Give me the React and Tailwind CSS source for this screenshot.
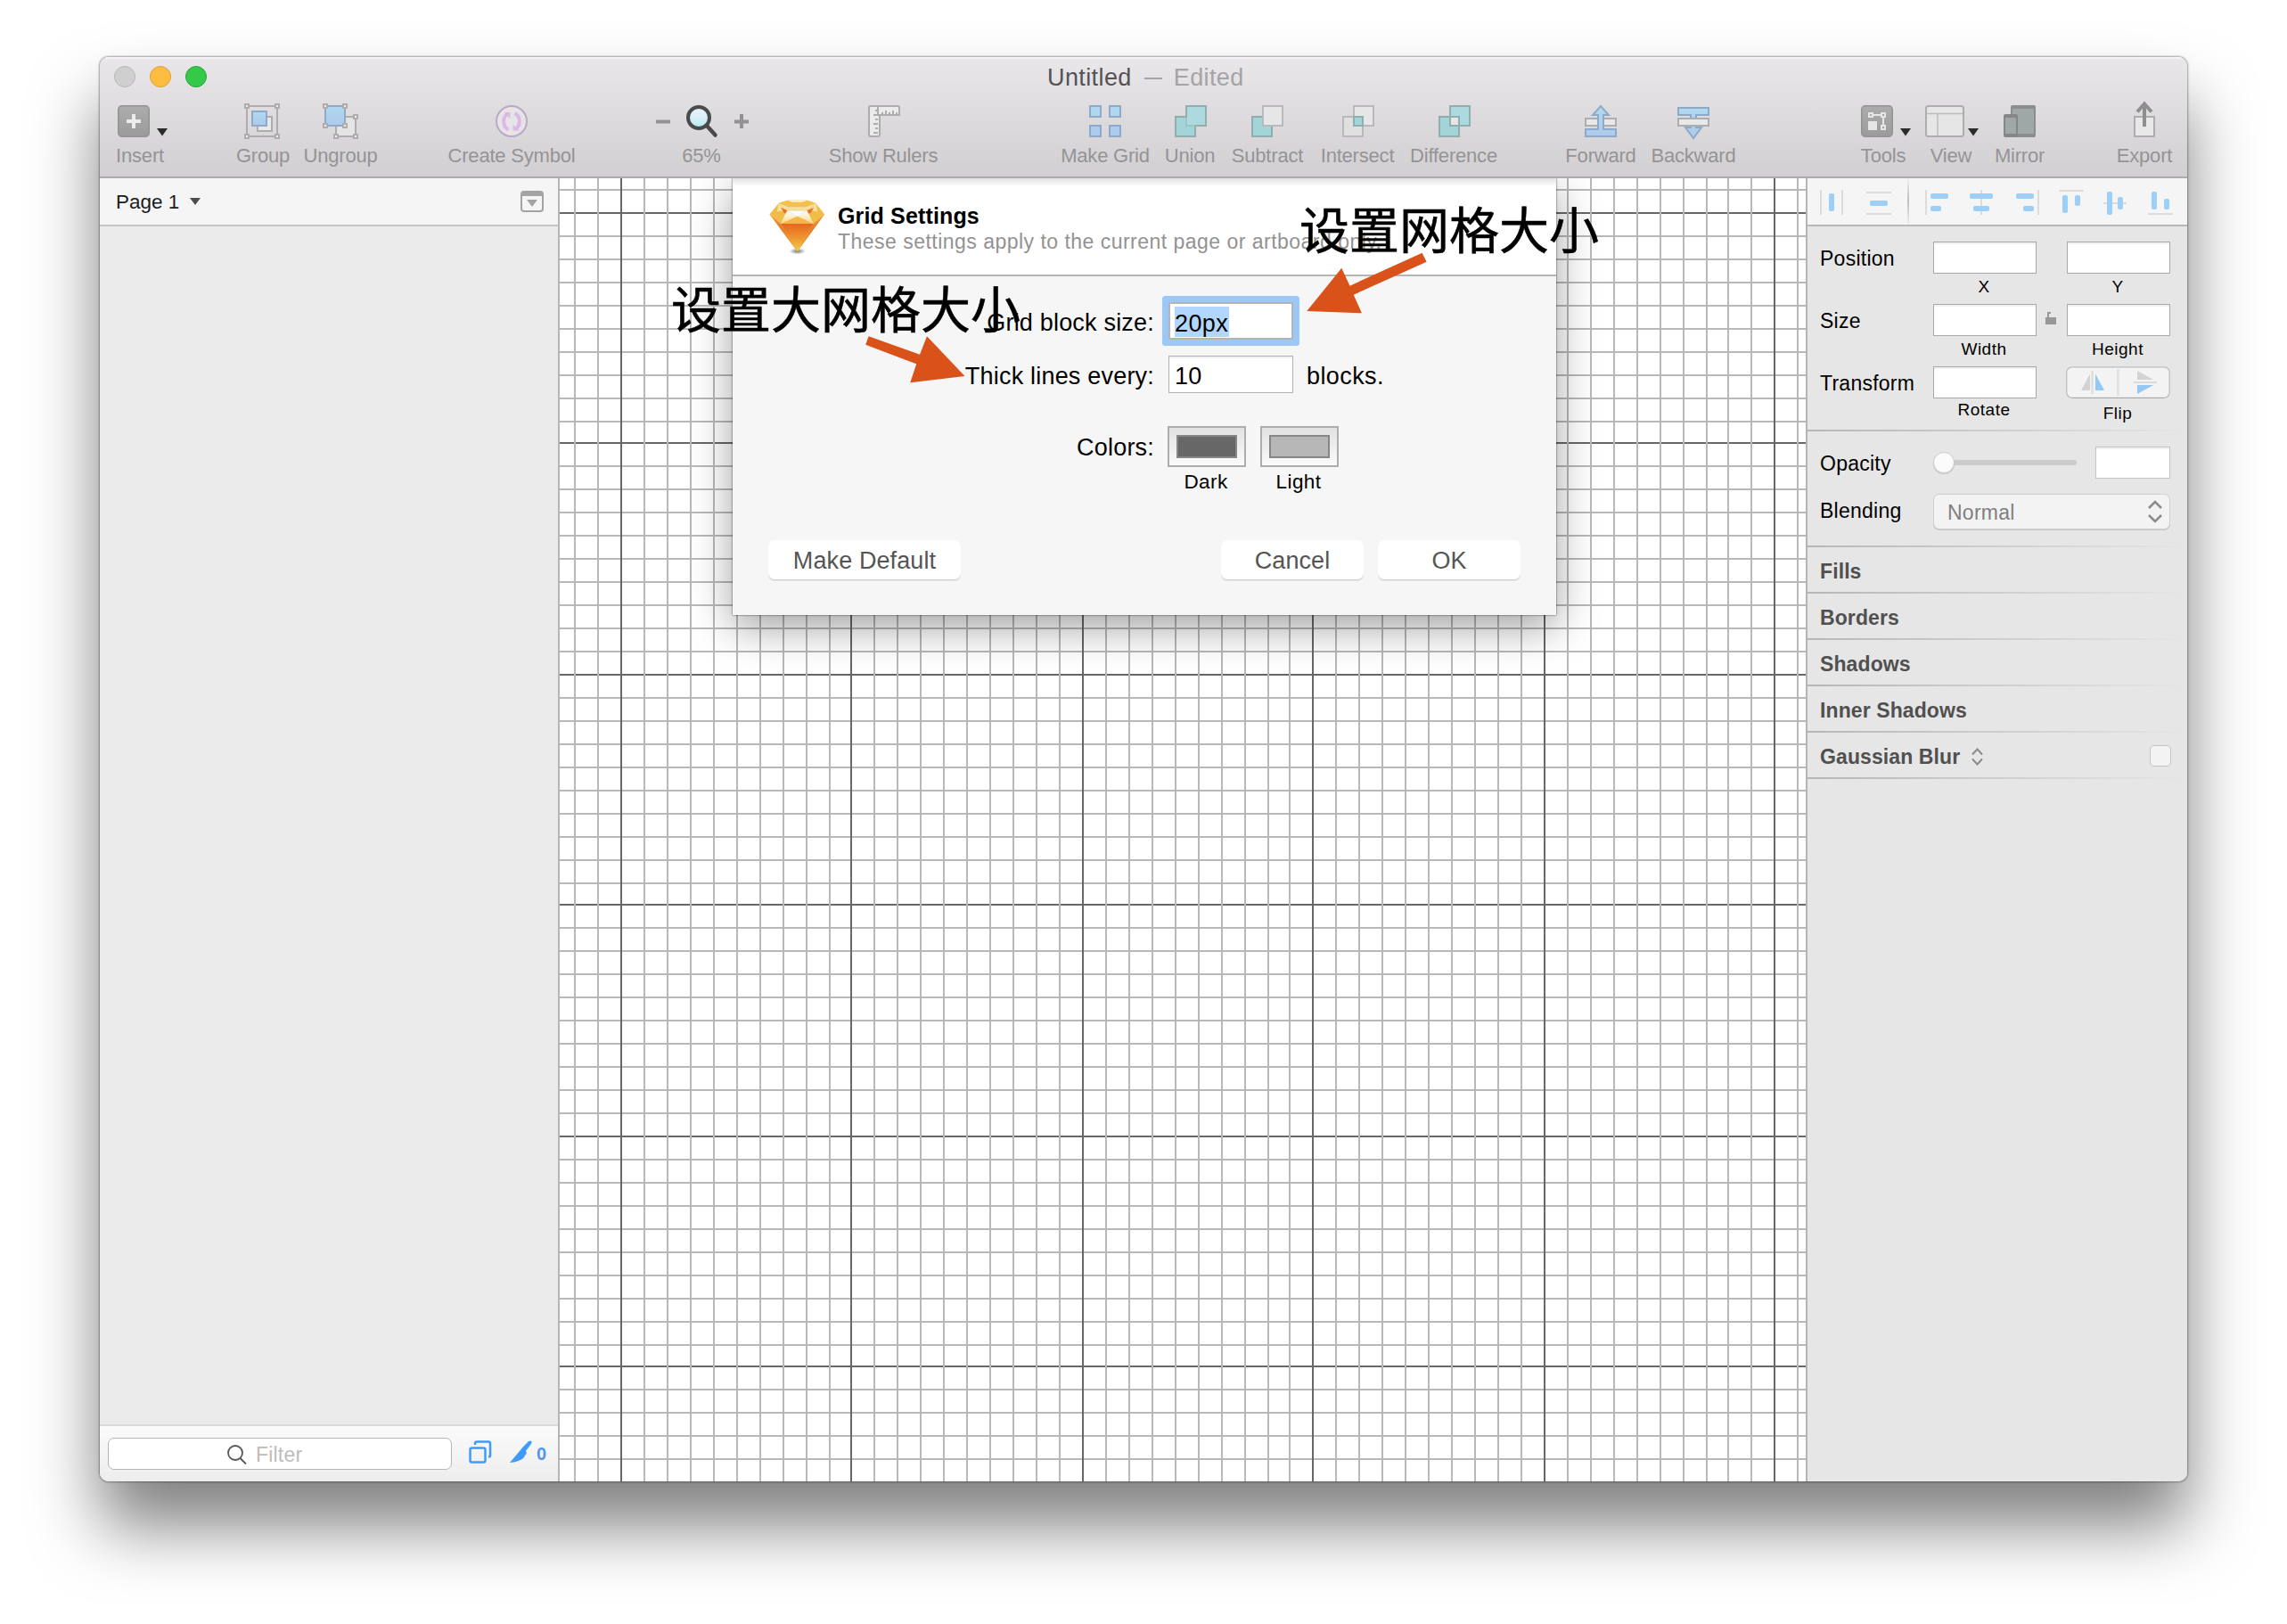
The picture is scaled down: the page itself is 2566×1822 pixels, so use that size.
import React from "react";

const range = (from, to, step = 26) => {
  const out = [];
  for (let v = from; v <= to; v += step) out.push(v);
  return out;
};

const V_LIGHT = [
  644, 670,
  ...range(722, 930), ...range(980, 1188), ...range(1240, 1422), 1446,
  ...range(1498, 1706), ...range(1758, 1914), 1938, 1964, 2016,
];
const V_DARK = [696, 954, 1214, 1472, 1732, 1990];
const H_LIGHT = [
  212, ...range(264, 472), ...range(522, 730), ...range(782, 990),
  ...range(1040, 1248), ...range(1300, 1508), ...range(1558, 1636),
];
const H_DARK = [238, 496, 756, 1014, 1274, 1532];

const vPath = (xs) => xs.map((x) => `M${x} 200h2v1462h-2z`).join("");
const hPath = (ys) => ys.map((y) => `M628 ${y}h1398v2h-1398z`).join("");

function GridCanvas() {
  return (
    <svg className="block h-[1462px] w-[1398px] shrink-0 bg-white" viewBox="628 200 1398 1462" shapeRendering="crispEdges">
      <path d={hPath(H_LIGHT)} fill="#b8b8b8" />
      <path d={hPath(H_DARK)} fill="#676767" />
      <path d={vPath(V_LIGHT)} fill="#b8b8b8" />
      <path d={vPath(V_DARK)} fill="#676767" />
    </svg>
  );
}

const Sq = ({ x, y, w = 36, h = 36, fill, stroke }) => (
  <rect x={x + 1} y={y + 1} width={w - 2} height={h - 2} fill={fill} stroke={stroke} strokeWidth="2" />
);
const Handle = ({ x, y }) => <rect x={x} y={y} width="4" height="4" fill="#eee" stroke="#adadad" strokeWidth="2" />;
const Caret = ({ x, y, fill = "#2b2b2b" }) => <path d={`M${x} ${y}h12l-6 8.500z`} fill={fill} />;

const GREY = "#adadad";
const BLUE = "#8fa9c9";
const TEAL = "#90adb0";

const TOOLS = [
  {
    label: "Insert", box: "ml-[19px] w-[52px]", vb: "131 114 52 44",
    icon: (
      <>
        <rect x="132.75" y="118.75" width="34.5" height="34.5" rx="4" fill="url(#btn)" stroke="#929292" strokeWidth="1.5" />
        <path d="M142 136h16M150 128v16" stroke="#ececec" strokeWidth="4" />
        <Caret x={176} y={144} />
      </>
    ),
  },
  {
    label: "Group", box: "ml-[82px] w-[60px]", vb: "265 114 60 44",
    icon: (
      <>
        <rect x="277" y="119" width="34" height="34" fill="none" stroke={GREY} strokeWidth="2" />
        <Handle x={275} y={117} /><Handle x={309} y={117} /><Handle x={275} y={151} /><Handle x={309} y={151} />
        <Sq x={288} y={130} w={18} h={18} fill="#e9e9e9" stroke={GREY} />
        <Sq x={282} y={124} w={18} h={18} fill="url(#blue)" stroke={BLUE} />
      </>
    ),
  },
  {
    label: "Ungroup", box: "ml-[16px] w-[82px]", vb: "341 114 82 44",
    icon: (
      <>
        <rect x="377" y="131" width="22" height="22" fill="#e4e4e4" stroke={GREY} strokeWidth="2" />
        <rect x="365" y="119" width="22" height="22" fill="url(#blue)" stroke={BLUE} strokeWidth="2" />
        <Handle x={363} y={117} /><Handle x={385} y={117} /><Handle x={363} y={139} /><Handle x={385} y={139} />
        <Handle x={397} y={129} /><Handle x={375} y={151} /><Handle x={397} y={151} />
      </>
    ),
  },
  {
    label: "Create Symbol", box: "ml-[80px] w-[142px]", vb: "503 114 142 44",
    icon: (
      <>
        <circle cx="574" cy="136" r="17" fill="#e6e4e7" stroke="#bba9c3" strokeWidth="2" />
        <path d="M570.500 145.500c-7-3.500-7-14.500-.5-18M577.500 127c7 3.500 7 14.500 .5 18" fill="none" stroke="#dcb8e6" strokeWidth="4" />
        <path d="M565.500 126h7v7zM582.500 146.500h-7v-7z" fill="#dcb8e6" />
      </>
    ),
  },
  {
    label: "65%", box: "ml-[120px] w-[44px]", vb: "765 114 44 44",
    icon: (
      <>
        <path d="M736 136.500h16" stroke="#929292" strokeWidth="4" />
        <path d="M824 136.500h16M832 128v16" stroke="#929292" strokeWidth="4" />
        <path d="M793 141l9.500 10.500" stroke="#4a4a4a" strokeWidth="4.500" strokeLinecap="round" />
        <circle cx="784" cy="132" r="12" fill="url(#lens)" stroke="#4a4a4a" strokeWidth="4" />
      </>
    ),
  },
  {
    label: "Show Rulers", box: "ml-[122px] w-[120px]", vb: "931 114 120 44",
    icon: (
      <>
        <path d="M977 119h30a2 2 0 0 1 2 2v8h-22v22a2 2 0 0 1-2 2h-8a2 2 0 0 1-2-2v-30a2 2 0 0 1 2-2z" fill="#ebebeb" stroke={GREY} strokeWidth="2" />
        <path d="M985 119v11M985 124h-3M985 129h-5M985 134h-3M985 139h-5M985 144h-3M985 149h-5M990 129v-3M994 129v-5M998 129v-3M1002 129v-5M1006 129v-3" stroke={GREY} strokeWidth="2" fill="none" />
      </>
    ),
  },
  {
    label: "Make Grid", box: "ml-[140px] w-[98px]", vb: "1191 114 98 44",
    icon: (
      <>
        <Sq x={1222} y={118} w={14} h={14} fill="#b0d7ee" stroke={BLUE} />
        <Sq x={1244} y={118} w={14} h={14} fill="#b0d7ee" stroke={BLUE} />
        <Sq x={1222} y={140} w={14} h={14} fill="#adcbec" stroke={BLUE} />
        <Sq x={1244} y={140} w={14} h={14} fill="#adcbec" stroke={BLUE} />
      </>
    ),
  },
  {
    label: "Union", box: "ml-[18px] w-[56px]", vb: "1307 114 56 44",
    icon: (
      <>
        <Sq x={1318} y={130} w={24} h={24} fill="#a3d5d8" stroke={TEAL} />
        <Sq x={1330} y={118} w={24} h={24} fill="#addade" stroke={TEAL} />
        <path d="M1331 132v9h10" fill="none" stroke="#9dc3c8" strokeWidth="2" />
      </>
    ),
  },
  {
    label: "Subtract", box: "ml-[18px] w-[82px]", vb: "1381 114 82 44",
    icon: (
      <>
        <Sq x={1404} y={130} w={24} h={24} fill="#a3d5d8" stroke={TEAL} />
        <Sq x={1416} y={118} w={24} h={24} fill="#e6e6e6" stroke="#b9b9bb" />
      </>
    ),
  },
  {
    label: "Intersect", box: "ml-[19px] w-[82px]", vb: "1482 114 82 44",
    icon: (
      <>
        <Sq x={1506} y={130} w={24} h={24} fill="#e0e0e0" stroke="#b9b9bb" />
        <Sq x={1518} y={118} w={24} h={24} fill="#e6e6e6" stroke="#b9b9bb" />
        <Sq x={1518} y={130} w={12} h={12} fill="#a3d5d8" stroke={TEAL} />
      </>
    ),
  },
  {
    label: "Difference", box: "ml-[19px] w-[96px]", vb: "1583 114 96 44",
    icon: (
      <>
        <Sq x={1614} y={130} w={24} h={24} fill="#a3d5d8" stroke={TEAL} />
        <Sq x={1626} y={118} w={24} h={24} fill="#addade" stroke={TEAL} />
        <Sq x={1626} y={130} w={12} h={12} fill="#e6e6e6" stroke={TEAL} />
      </>
    ),
  },
  {
    label: "Forward", box: "ml-[79px] w-[76px]", vb: "1758 114 76 44",
    icon: (
      <>
        <Sq x={1778} y={132} w={36} h={10} fill="#e8e8e8" stroke={GREY} />
        <path d="M1779 145h14v-16h-6l9-10 9 10h-6v16h14v8h-34z" fill="url(#blue)" stroke={BLUE} strokeWidth="2" />
      </>
    ),
  },
  {
    label: "Backward", box: "ml-[20px] w-[92px]", vb: "1854 114 92 44",
    icon: (
      <>
        <path d="M1883 121h34v8h-14v14h6l-9 12-9-12h6v-14h-14z" fill="url(#blue)" stroke={BLUE} strokeWidth="2" />
        <Sq x={1882} y={132} w={36} h={10} fill="#e8e8e8" stroke={GREY} />
      </>
    ),
  },
  {
    label: "Tools", box: "ml-[143px] w-[48px]", vb: "2089 114 48 44",
    icon: (
      <>
        <rect x="2088.750" y="118.750" width="34.500" height="34.500" rx="4" fill="url(#btn)" stroke="#929292" strokeWidth="1.500" />
        <rect x="2096" y="136" width="10" height="10" fill="#e6e6e6" />
        <path d="M2101 129h10M2113 131v10" stroke="#e6e6e6" strokeWidth="2" />
        <rect x="2097" y="127" width="4" height="4" fill="none" stroke="#e6e6e6" strokeWidth="2" />
        <rect x="2111" y="127" width="4" height="4" fill="none" stroke="#e6e6e6" strokeWidth="2" />
        <rect x="2111" y="141" width="4" height="4" fill="none" stroke="#e6e6e6" strokeWidth="2" />
        <Caret x={2132} y={144} />
      </>
    ),
  },
  {
    label: "View", box: "ml-[29px] w-[46px]", vb: "2166 114 46 44",
    icon: (
      <>
        <rect x="2161" y="119" width="42" height="34" rx="2.500" fill="#e6e6e6" stroke={GREY} strokeWidth="2" />
        <path d="M2162 127.500h40M2174 128v24" stroke="#bcbcbc" strokeWidth="1.500" />
        <Caret x={2208} y={144} />
      </>
    ),
  },
  {
    label: "Mirror", box: "ml-[26px] w-[56px]", vb: "2238 114 56 44",
    icon: (
      <>
        <rect x="2256" y="118" width="28" height="36" rx="2" fill="#8c8e8e" />
        <rect x="2258" y="122" width="24" height="28" fill="#a0a7a7" />
        <rect x="2248" y="128" width="16" height="26" rx="2" fill="#858787" />
        <rect x="2250" y="132" width="12" height="18" fill="#a0a7a7" />
      </>
    ),
  },
  {
    label: "Export", box: "ml-[82px] w-[60px]", vb: "2376 114 60 44",
    icon: (
      <>
        <Sq x={2394} y={130} w={24} h={24} fill="#e8e8e8" stroke={GREY} />
        <path d="M2406 142v-25M2398 125.500l8-9 8 9" fill="none" stroke="#8e8e8e" strokeWidth="4" />
      </>
    ),
  },
];

function Defs() {
  return (
    <svg className="absolute h-0 w-0">
      <defs>
        <linearGradient id="btn" x1="0" y1="0" x2="0" y2="1"><stop offset="0" stopColor="#acacac" /><stop offset="1" stopColor="#9b9b9b" /></linearGradient>
        <linearGradient id="blue" x1="0" y1="0" x2="0" y2="1"><stop offset="0" stopColor="#b0d9ee" /><stop offset="1" stopColor="#adcaeb" /></linearGradient>
        <linearGradient id="lens" x1="0" y1="0" x2="0" y2="1"><stop offset="0" stopColor="#eef4fc" /><stop offset=".6" stopColor="#d3edf5" /><stop offset="1" stopColor="#a3edf2" /></linearGradient>
      </defs>
    </svg>
  );
}

function TopBar() {
  return (
    <header className="relative flex h-[136px] flex-col border-b-2 border-[#adabae] bg-linear-to-b from-[#e9e7ea] to-[#d1cfd2] shadow-[inset_0_2px_0_#f4f3f5]">
      <div className="flex h-[50px] shrink-0">
        <div className="flex w-[1063px] gap-4 pt-[10px] pl-4">
          <i className="size-6 rounded-full border border-[#b5b5b5] bg-[#cfcfcf]" />
          <i className="size-6 rounded-full border border-[#e29b35] bg-[#fdbd41]" />
          <i className="size-6 rounded-full border border-[#22a437] bg-[#35c94a]" />
        </div>
        <div className="flex gap-[14px] pt-[7px] text-[27px] leading-[32px] tracking-[0.4px] whitespace-nowrap text-[#545255]">
          <span>Untitled</span>
          <span className="flex gap-[13px] text-[#a5a3a6]"><svg className="h-8 w-5" viewBox="0 0 20 32"><path d="M0 17h20" stroke="currentColor" strokeWidth="2" /></svg>Edited</span>
        </div>
      </div>
      <div className="flex">
        {TOOLS.map((t) => (
          <div key={t.label} className={`flex shrink-0 flex-col items-center ${t.box}`}>
            <svg className="h-[44px] w-full overflow-visible" viewBox={t.vb}>{t.icon}</svg>
            <span className="mt-[4px] text-[22px] leading-[26px] tracking-[-0.2px] whitespace-nowrap text-[#959396]">{t.label}</span>
          </div>
        ))}
      </div>
    </header>
  );
}

function Sidebar() {
  return (
    <aside className="flex w-[516px] shrink-0 flex-col border-r-2 border-[#b5b5b5] bg-[#ebebeb]">
      <div className="flex h-[54px] items-center border-b-2 border-[#c6c6c6] bg-[#f5f5f5] pr-4 pl-[18px]">
        <span className="mt-px text-[22.5px] leading-[26px] text-[#1c1c1c]">Page 1</span>
        <svg className="ml-[11px] h-[10px] w-[14px]" viewBox="0 0 14 10"><path d="M1 1h12l-6 8z" fill="#4c4c4c" /></svg>
        <svg className="mr-0 ml-auto h-6 w-[26px]" viewBox="0 0 26 24">
          <rect x="1" y="1" width="24" height="22" rx="3" fill="none" stroke="#a3a3a3" strokeWidth="2" />
          <path d="M1 6V3q0-2 2-2h20q2 0 2 2v3zM7 10h12l-6 8z" fill="#a3a3a3" />
        </svg>
      </div>
      <div className="flex-1" />
      <div className="flex h-[64px] items-start border-t-2 border-[#dadada] bg-linear-to-b from-[#fbfbfb] to-[#ededed] pt-[13px] pl-[9px]">
        <div className="flex h-[36px] w-[386px] items-center rounded-[7px] border-[1.5px] border-[#b5b5b5] bg-white pl-[132px]">
          <svg className="mt-px ml-px h-[22px] w-[22px]" viewBox="0 0 22 22" fill="none" stroke="#555" strokeWidth="1.800"><circle cx="9" cy="9" r="8" /><path d="M14.500 15l6.500 6.500" /></svg>
          <span className="mt-px ml-[10px] text-[23px] leading-[26px] tracking-[0.2px] text-[#bdbdbd]">Filter</span>
        </div>
        <svg className="mt-[3px] ml-[19px] h-[26px] w-[26px]" viewBox="0 0 26 26" fill="none" stroke="#3f9bfb" strokeWidth="2.500"><rect x="1.500" y="8.500" width="17" height="16" rx="2" /><path d="M7 5V3.500q0-2 2-2h13q2 0 2 2v13q0 2-2 2" /></svg>
        <svg className="mt-[3px] ml-[20px] h-[26px] w-[26px]" viewBox="0 0 26 26" fill="#3f9bfb"><path d="M0 25C6 18 13 9 20.500 1.500q3-2 4 0c.7 2-5 8-6.500 10.500l1 2.500c-1 1-2 2-3 4.500C12 23 6 24.500 0 25z" /></svg>
        <span className="mt-[7px] ml-[4px] text-[20px] leading-[22px] font-bold text-[#5595ef]">0</span>
      </div>
    </aside>
  );
}

const ALIGN = {
  lines: "M2042 213h2v28h-2zM2066 213h2v28h-2zM2094 215h28v2h-28zM2094 239h28v2h-28zM2160 213h2v28h-2zM2222 213h2v28h-2zM2286 213h2v28h-2zM2310 213h28v2h-28zM2360 227h26v2h-26zM2410 239h28v2h-28z",
  pills: [
    [2052, 217, 6, 20], [2098, 225, 20, 6],
    [2166, 217, 20, 6], [2166, 231, 12, 6],
    [2210, 217, 26, 6], [2214, 231, 18, 6],
    [2262, 217, 20, 6], [2270, 231, 12, 6],
    [2314, 219, 6, 20], [2328, 219, 6, 12],
    [2364, 215, 6, 26], [2376, 221, 6, 14],
    [2414, 215, 6, 20], [2428, 223, 6, 12],
  ],
};

function AlignBar() {
  return (
    <svg className="block h-[52px] w-[426px] shrink-0 bg-[#f5f5f5]" viewBox="2028 200 426 52">
      <defs><linearGradient id="sep" x1="0" y1="0" x2="0" y2="1"><stop offset="0" stopColor="#f0f0f0" /><stop offset=".5" stopColor="#bdbdbd" /><stop offset="1" stopColor="#f0f0f0" /></linearGradient></defs>
      <path d={ALIGN.lines} fill="#dcdcdc" />
      <rect x="2140" y="200" width="2" height="52" fill="url(#sep)" />
      {ALIGN.pills.map(([x, y, w, h]) => <rect key={`${x}-${y}`} x={x} y={y} width={w} height={h} rx="2" fill="#9ecff7" />)}
    </svg>
  );
}

const Field = ({ className = "w-[116px]" }) => <div className={`h-9 border border-[#a8a8a8] bg-white shadow-[inset_0_2px_0_#f0f0f0] ${className}`} />;
const Divider = () => <div className="h-[2px] shrink-0 bg-linear-to-r from-[#b6b6b6] to-[#e6e6e6]" />;
const Label = ({ children }) => <span className="w-[127px] shrink-0 text-[23px] leading-[39px] tracking-[0.25px] text-black">{children}</span>;
const Small = ({ children, className = "mt-[4px]" }) => <span className={`-ml-[2px] text-[19px] leading-[22px] tracking-[0.5px] text-black ${className}`}>{children}</span>;

const Flip = () => (
  <svg className="-ml-px h-9 w-[117px] overflow-visible" viewBox="0 0 117 36">
    <rect x=".75" y=".75" width="115.500" height="34.500" rx="6" fill="#f3f3f3" stroke="#bdbdbd" strokeWidth="1.250" />
    <path d="M7 35.500h103" stroke="#a8a8a8" />
    <path d="M58.500 3v30" stroke="#e3e3e3" strokeWidth="3" />
    <path d="M29.500 5v26M76 18h26" stroke="#dadada" strokeWidth="2" />
    <path d="M17 27h10V8.500zM80 15V5l18 10z" fill="#d3d3d3" />
    <path d="M33 8.500V27h10zM80 21v10l18-10z" fill="#93c8f0" />
  </svg>
);

function FieldRow({ label, left, right, leftClass, rightClass, middle, control }) {
  return (
    <div className="flex h-[70px] items-start">
      <Label>{label}</Label>
      <div className="flex w-[116px] flex-col items-center"><Field /><Small className={leftClass}>{left}</Small></div>
      <div className="flex h-9 w-[34px] items-center justify-center">{middle}</div>
      <div className="flex w-[116px] flex-col items-center">{control || <Field />}<Small className={rightClass}>{right}</Small></div>
    </div>
  );
}

const Section = ({ children }) => (
  <>
    <div className="flex h-[50px] items-center pt-[3px] pr-[18px] pl-[14px] text-[23px] leading-[28px] font-bold tracking-[0.1px] text-[#505050]">{children}</div>
    <Divider />
  </>
);

function Inspector() {
  return (
    <aside className="flex w-[428px] shrink-0 flex-col border-l-2 border-[#b5b5b5] bg-[#e6e6e6]">
      <AlignBar />
      <div className="h-[2px] bg-[#b8b8b8]" />
      <div className="flex h-[228px] flex-col pt-[17px] pl-[14px]">
        <FieldRow label="Position" left="X" right="Y" />
        <FieldRow
          label="Size" left="Width" right="Height"
          middle={<svg className="mb-1 -ml-[3px] h-4 w-3" viewBox="0 0 12 16"><path d="M0 7h2V1h4v2H4v4h8v8H0z" fill="#979797" /></svg>}
        />
        <FieldRow label="Transform" left="Rotate" right="Flip" leftClass="mt-[2px]" rightClass="mt-[6px]" control={<Flip />} />
      </div>
      <Divider />
      <div className="flex h-[128px] flex-col pt-[17px] pl-[14px]">
        <div className="flex h-[53px] items-start">
          <Label>Opacity</Label>
          <div className="mt-[6px] flex w-[161px] items-center">
            <i className="z-10 size-6 shrink-0 rounded-full border border-[#cdcdcd] bg-[#fbfbfb] shadow-[0_1px_1px_rgba(0,0,0,.15)]" />
            <i className="-ml-1 h-[6px] flex-1 rounded-full bg-[#cbcbcb]" />
          </div>
          <Field className="ml-[21px] w-[84px] border-[#c4c4c4]" />
        </div>
        <div className="flex items-start">
          <Label>Blending</Label>
          <div className="flex h-10 w-[266px] items-center justify-between rounded-[7px] border border-[#d0d0d0] bg-[#f3f3f3] pr-2 pl-[15px] shadow-[0_1px_0_#c6c6c6]">
            <span className="mt-px text-[23px] leading-[26px] tracking-[0.25px] text-[#808080]">Normal</span>
            <svg className="h-[26px] w-[16px]" viewBox="0 0 16 26" fill="none" stroke="#8b8b8b" strokeWidth="2.500"><path d="M1 9l7-7 7 7M1 17l7 7 7-7" /></svg>
          </div>
        </div>
      </div>
      <Divider />
      <Section>Fills</Section>
      <Section>Borders</Section>
      <Section>Shadows</Section>
      <Section>Inner Shadows</Section>
      <Section>
        Gaussian Blur
        <svg className="ml-[13px] h-5 w-[13px]" viewBox="0 0 13 20" fill="none" stroke="#8b8b8b" strokeWidth="2"><path d="M1 7.500l5.500-6 5.500 6M1 12.500l5.500 6 5.500-6" /></svg>
        <i className="mb-[2px] ml-auto size-6 rounded-[5px] border border-[#c4c4c4] bg-[#f3f3f3]" />
      </Section>
    </aside>
  );
}

function Gem() {
  return (
    <svg className="h-[76px] w-[74px]" viewBox="-3 0 226 228">
      <defs>
        <radialGradient id="gemShadow"><stop offset="0" stopColor="#000" stopOpacity=".55" /><stop offset="1" stopColor="#000" stopOpacity="0" /></radialGradient>
        <linearGradient id="gemLow" x1="0" y1="0" x2="0" y2="1"><stop offset="0" stopColor="#e8661f" /><stop offset=".5" stopColor="#ee9430" /><stop offset="1" stopColor="#f3cf4c" /></linearGradient>
        <linearGradient id="gemSide" x1="0" y1="0" x2="0" y2="1"><stop offset="0" stopColor="#f0a040" /><stop offset=".4" stopColor="#e67a2a" /><stop offset="1" stopColor="#f0b244" /></linearGradient>
        <linearGradient id="gemTop" x1="0" y1="0" x2="0" y2="1"><stop offset="0" stopColor="#f8e6b0" /><stop offset="1" stopColor="#eeb23c" /></linearGradient>
        <linearGradient id="gemFace" x1="0" y1="0" x2="0" y2="1"><stop offset="0" stopColor="#fff" /><stop offset="1" stopColor="#f7d98f" /></linearGradient>
      </defs>
      <ellipse cx="115" cy="202" rx="28" ry="11" fill="url(#gemShadow)" />
      <path d="M20 76L50 38 80 28h70l29 10 29 38-93 127z" fill="url(#gemTop)" />
      <path d="M50 40l30 23-22 45-38-32z" fill="#f1bd49" />
      <path d="M179 40l-31 23 22 45 38-32z" fill="#f1bd49" />
      <path d="M50 40l26 22-30 4z" fill="#f9e2a0" />
      <path d="M179 40l-27 22 32 4z" fill="#f9e2a0" />
      <path d="M58 52l22 11h68l24-11-12 20H70z" fill="#e8702a" />
      <path d="M20 76l38 32 57 95z" fill="url(#gemSide)" />
      <path d="M208 76l-38 32-55 95z" fill="url(#gemSide)" />
      <path d="M58 108h112l-55 95z" fill="url(#gemLow)" />
      <path d="M80 63h68l-33 20z" fill="#fff" />
      <path d="M80 63l35 20-57 25z" fill="url(#gemFace)" />
      <path d="M148 63l-33 20 55 25z" fill="url(#gemFace)" />
      <path d="M58 108l57-25 55 25z" fill="#f2b64a" />
      <path d="M50 38l30-10h70l29 10-34 13H84z" fill="#f2c04e" />
      <path d="M80 28h70l-18 6H98z" fill="#fbf0cf" />
    </svg>
  );
}

const FormLabel = ({ children }) => <span className="w-[473px] shrink-0 text-right text-[27px] leading-[47px] tracking-[0.2px] whitespace-nowrap">{children}</span>;
const PushButton = ({ children, className }) => (
  <button className={`flex h-11 items-center justify-center rounded-[7px] bg-white pt-[2px] text-[27px] tracking-[0.1px] text-[#555] shadow-[0_1px_0_#cfcfcf,0_2px_0_#e6e6e6] ${className}`}>{children}</button>
);
const Swatch = ({ color, label }) => (
  <div className="flex flex-col items-center">
    <div className="flex h-[46px] w-[88px] items-center justify-center border-2 border-[#adadad] bg-linear-to-b from-[#e2e2e2] to-[#fafafa]">
      <div className={`h-[26px] w-[68px] border-2 border-[#868686] ${color}`} />
    </div>
    <span className="mt-[4px] -ml-[2px] text-[22.5px] leading-[26px] tracking-[0.4px]">{label}</span>
  </div>
);

function GridSettings() {
  return (
    <section className="absolute top-0 left-[710px] flex h-[490px] w-[924px] flex-col bg-[#f6f6f6] text-black shadow-[0_0_2px_rgba(0,0,0,.7),0_14px_44px_rgba(0,0,0,.37)]">
      <div className="flex h-[110px] shrink-0 border-b-2 border-[#b5b5b5] bg-white bg-linear-to-b from-[#e2e2e2] to-white to-[9px] pt-[15px] pl-[34px]">
        <Gem />
        <div className="ml-[10px] flex flex-col pt-[13px]">
          <span className="text-[25px] leading-[28px] font-bold tracking-[0.15px]">Grid Settings</span>
          <span className="mt-px text-[23px] leading-[28px] tracking-[0.48px] whitespace-nowrap text-[#929292]">These settings apply to the current page or artboard only.</span>
        </div>
      </div>
      <div className="mt-[29px] flex h-[42px] shrink-0">
        <FormLabel>Grid block size:</FormLabel>
        <div className="ml-4 flex h-[42px] w-[140px] rounded-[1px] border-2 border-[#b5b5b5] bg-white pt-[3px] pl-[5px] shadow-[0_0_0_7px_#9cc8f8]">
          <span className="h-[34px] bg-[#b2d7fe] pr-px text-[27px] leading-[38px] tracking-[0.4px]">20px</span>
        </div>
      </div>
      <div className="mt-[18px] flex h-[42px] shrink-0">
        <FormLabel>Thick lines every:</FormLabel>
        <div className="ml-4 h-[42px] w-[140px] border border-[#b0b0b0] bg-white pl-[6px] text-[27px] leading-[44px] tracking-[0.2px] shadow-[inset_0_2px_0_#f0f0f0]">10</div>
        <span className="ml-[15px] text-[27px] leading-[47px] tracking-[0.4px]">blocks.</span>
      </div>
      <div className="mt-[37px] flex shrink-0">
        <div className="pt-px"><div className="flex"><FormLabel>Colors:</FormLabel></div></div>
        <div className="ml-[15px] flex gap-4">
          <Swatch color="bg-[#676767]" label="Dark" />
          <Swatch color="bg-[#b7b7b7]" label="Light" />
        </div>
      </div>
      <div className="mt-auto mb-10 flex px-10">
        <PushButton className="w-[216px]">Make Default</PushButton>
        <PushButton className="mr-4 ml-auto w-[160px]">Cancel</PushButton>
        <PushButton className="w-[160px]">OK</PushButton>
      </div>
    </section>
  );
}

function Annotations() {
  return (
    <>
      <span className="absolute top-[159px] left-[1346px] font-['Noto_Sans_CJK_SC',sans-serif] text-[56px] leading-[64px] whitespace-nowrap text-black [-webkit-text-stroke:0.6px_black]">设置网格大小</span>
      <span className="absolute top-[248px] left-[641px] font-['Noto_Sans_CJK_SC',sans-serif] text-[56px] leading-[64px] whitespace-nowrap text-black [-webkit-text-stroke:0.6px_black]">设置大网格大小</span>
      <svg className="absolute top-[216px] left-[858px] h-[152px] w-[632px]" viewBox="970 280 632 152" fill="#d85219">
        <path d="M971.200 386.700L974.600 377.300 1032 397.700 1040 377.300 1082.500 422 1021.300 429.300 1028.200 408.300z" />
        <path d="M1466.300 349L1505.300 300.700 1514.500 320.700 1595.600 283.700 1600.600 293.700 1518.700 330.700 1527.900 351.300z" />
      </svg>
    </>
  );
}

export default function App() {
  return (
    <div className="h-[1822px] w-[2566px] overflow-hidden bg-white pt-[64px] pl-[112px] font-['Liberation_Sans',sans-serif]">
      <Defs />
      <div className="relative flex h-[1598px] w-[2342px] flex-col overflow-hidden rounded-[10px] shadow-[0_0_2px_1px_rgba(0,0,0,.35),0_50px_76px_rgba(0,0,0,.5)]">
        <TopBar />
        <main className="relative flex flex-1 overflow-hidden">
          <Sidebar />
          <GridCanvas />
          <Inspector />
          <GridSettings />
        </main>
        <Annotations />
      </div>
    </div>
  );
}
